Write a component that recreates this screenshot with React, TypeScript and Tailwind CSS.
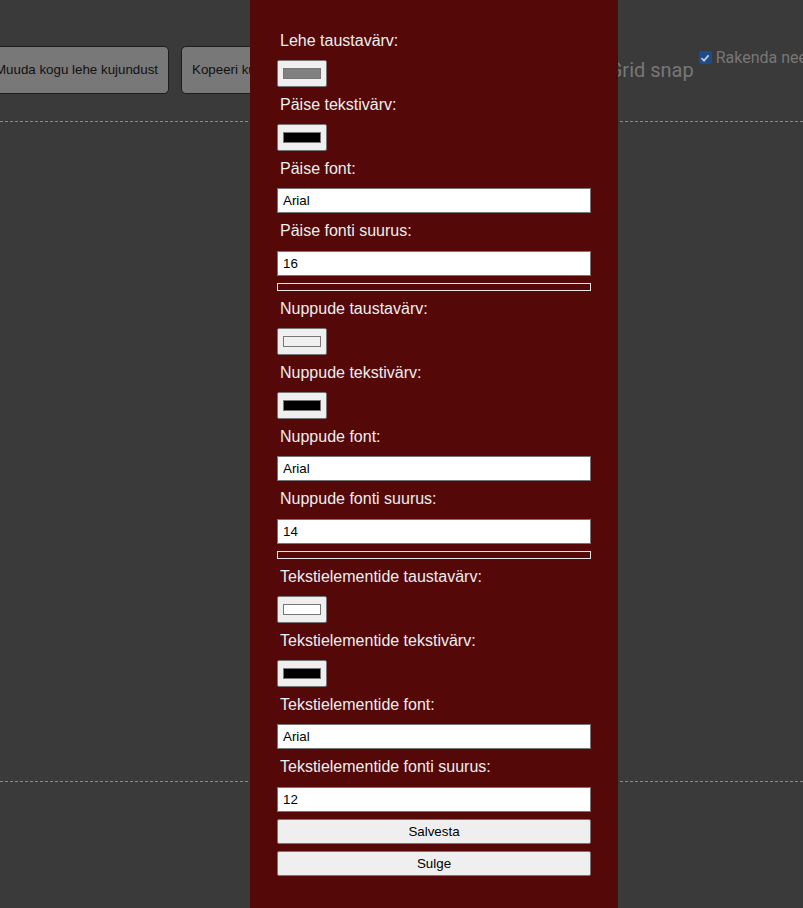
import React from 'react'

type Field =
  | { kind: 'color'; label: string; swatch: string }
  | { kind: 'text'; label: string; value: string }
  | { kind: 'size'; label: string; value: string; slider: boolean }

// kujunduse seaded, grupid järjest
const fields: Field[] = [
  { kind: 'color', label: 'Lehe taustavärv:', swatch: '#808080' },
  { kind: 'color', label: 'Päise tekstivärv:', swatch: '#000000' },
  { kind: 'text', label: 'Päise font:', value: 'Arial' },
  { kind: 'size', label: 'Päise fonti suurus:', value: '16', slider: true },
  { kind: 'color', label: 'Nuppude taustavärv:', swatch: '#f0f0f0' },
  { kind: 'color', label: 'Nuppude tekstivärv:', swatch: '#000000' },
  { kind: 'text', label: 'Nuppude font:', value: 'Arial' },
  { kind: 'size', label: 'Nuppude fonti suurus:', value: '14', slider: true },
  { kind: 'color', label: 'Tekstielementide taustavärv:', swatch: '#ffffff' },
  { kind: 'color', label: 'Tekstielementide tekstivärv:', swatch: '#000000' },
  { kind: 'text', label: 'Tekstielementide font:', value: 'Arial' },
  { kind: 'size', label: 'Tekstielementide fonti suurus:', value: '12', slider: false },
]

const arial = "font-['Liberation_Sans',Arial,sans-serif]"

const Label: React.FC<{ text: string; extra?: string }> = ({ text, extra = 'mb-[10px]' }) => (
  <p className={`ml-[3px] h-[18px] text-[16px] leading-[18px] text-[#eeeeee] ${extra}`}>{text}</p>
)

const TextBox: React.FC<{ value: string }> = ({ value }) => (
  <input
    type="text"
    defaultValue={value}
    className="block h-[25px] w-full border border-[#767676] bg-white px-[5px] text-[13.33px] text-black outline-none"
  />
)

const FieldRow: React.FC<{ field: Field }> = ({ field }) => {
  if (field.kind === 'color') {
    return (
      <div className="mb-[9px]">
        <Label text={field.label} />
        <div className="flex h-[27px] w-[50px] items-center justify-center rounded-[2px] border border-[#767676] bg-[#efefef]">
          <div className="h-[11px] w-[38px] border border-[#777777]" style={{ backgroundColor: field.swatch }} />
        </div>
      </div>
    )
  }
  if (field.kind === 'text') {
    return (
      <div className="mb-[9px]">
        <Label text={field.label} />
        <TextBox value={field.value} />
      </div>
    )
  }
  return (
    <div className={field.slider ? 'mb-[9px]' : ''}>
      <Label text={field.label} extra="mb-[11px]" />
      <TextBox value={field.value} />
      {field.slider && <div className="mt-[7px] h-[8px] w-full border border-[#e6e6e6]" />}
    </div>
  )
}

const App: React.FC = () => {
  return (
    <div className={`relative h-[908px] w-full overflow-hidden bg-[#3a3a3a] ${arial}`}>
      {/* tööriistariba */}
      <div className="ml-[-16px] flex items-start pt-[46px]">
        <button className="h-[48px] rounded-[5px] border border-[#1c1c1c] bg-[#787878] px-[10px] text-[13.33px] whitespace-nowrap text-[#111111]">
          Muuda kogu lehe kujundust
        </button>
        <button className="ml-[12px] h-[48px] rounded-[5px] border border-[#1c1c1c] bg-[#787878] px-[10px] text-[13.33px] whitespace-nowrap text-[#111111]">
          Kopeeri kujundust
        </button>
        <span className="ml-[299px] flex h-[48px] items-center font-['Roboto',sans-serif] text-[20px] whitespace-nowrap text-[#777777]">
          Grid snap
        </span>
        <label className="ml-[5px] flex items-center gap-[4px] pt-[2px] font-['Roboto',sans-serif] text-[16px] leading-[19px] whitespace-nowrap text-[#777777]">
          <span className="flex h-[13px] w-[13px] items-center justify-center rounded-[2px] bg-[#1d4c8c]">
            <svg width="10" height="10" viewBox="0 0 10 10">
              <path d="M1.5 5.2 L4 7.6 L8.6 2.4" fill="none" stroke="#c9c9c9" strokeWidth="1.8" />
            </svg>
          </span>
          Rakenda need
        </label>
      </div>

      {/* lõuend */}
      <div className="mt-[27px] h-[661px] w-full border-y border-dashed border-[#8a8a8a]" />

      {/* kujunduse modaal */}
      <div className="absolute top-0 left-[250px] h-[908px] w-[368px] bg-[#540808] px-[27px] pt-[32px]">
        {fields.map((f) => (
          <FieldRow key={f.label} field={f} />
        ))}
        <button className="mt-[7px] block h-[25px] w-full rounded-[2px] border border-[#767676] bg-[#efefef] text-[13.33px] text-black">
          Salvesta
        </button>
        <button className="mt-[7px] block h-[25px] w-full rounded-[2px] border border-[#767676] bg-[#efefef] text-[13.33px] text-black">
          Sulge
        </button>
      </div>
    </div>
  )
}

export default App
